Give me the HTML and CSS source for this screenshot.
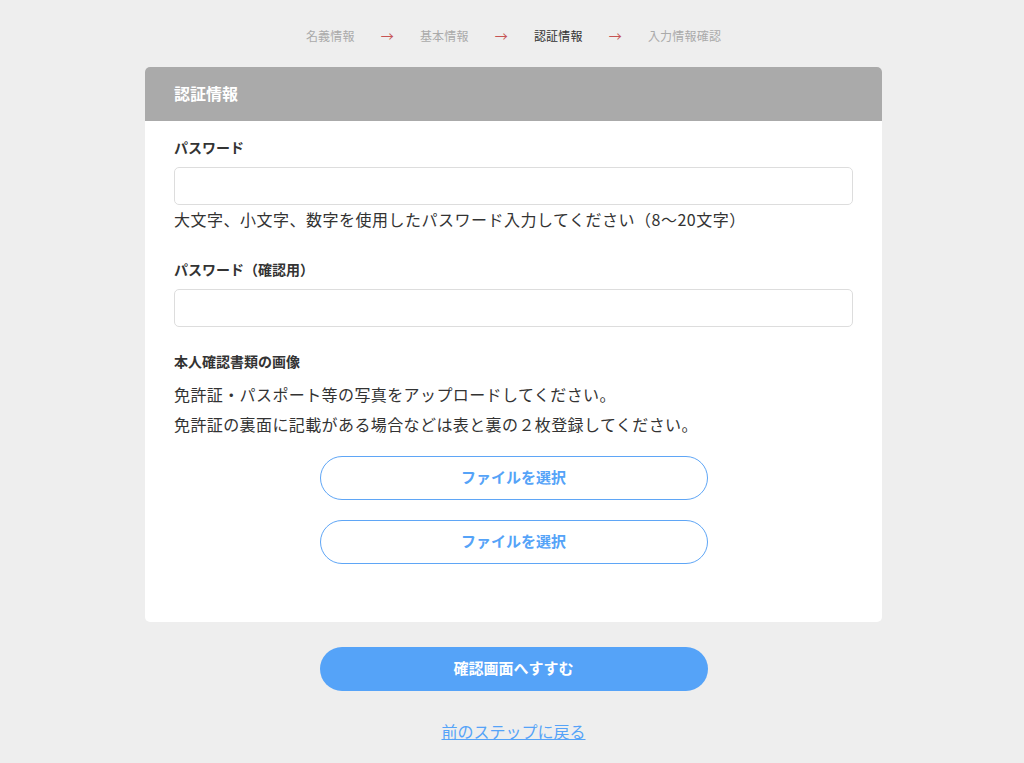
FILE: index.html
```html
<!DOCTYPE html>
<html lang="ja">
<head>
  <meta charset="UTF-8" />
  <meta name="viewport" content="width=device-width, initial-scale=1.0"/>
  <title>認証情報</title>
  <link rel="stylesheet" href="styles.css">
</head>
<body>
  <ol class="steps">
    <li>名義情報</li>
    <li class="arrow">→</li>
    <li>基本情報</li>
    <li class="arrow">→</li>
    <li class="current">認証情報</li>
    <li class="arrow">→</li>
    <li>入力情報確認</li>
  </ol>

  <div class="card">
    <div class="card-head">認証情報</div>
    <div class="card-body">
      <label class="field-label" for="pw">パスワード</label>
      <input type="password" id="pw" class="text-input"/>
      <p class="help">大文字、小文字、数字を使用したパスワード入力してください（8〜20文字）</p>

      <label class="field-label second" for="pw2">パスワード（確認用）</label>
      <input type="password" id="pw2" class="text-input"/>

      <div class="field-label third">本人確認書類の画像</div>
      <p class="note">免許証・パスポート等の写真をアップロードしてください。<br>免許証の裏面に記載がある場合などは表と裏の２枚登録してください。</p>

      <div class="files">
        <button class="file-btn">ファイルを選択</button>
        <button class="file-btn">ファイルを選択</button>
      </div>
    </div>
  </div>

  <button class="submit">確認画面へすすむ</button>
  <a class="back" href="#">前のステップに戻る</a>
</body>
</html>
```

FILE: styles.css
```css
body {
  font-family: "Noto Sans CJK JP", "Noto Sans", sans-serif;
  background-color: #eeeeee;
  color: #333;
  margin: 0;
  padding: 26px 0 0 3px;
  display: flex;
  flex-direction: column;
  align-items: center;
}

.steps {
  list-style: none;
  margin: 0 0 21px;
  padding: 0;
  display: flex;
  gap: 26px;
  font-size: 12px;
  line-height: 20px;
  color: #aaa;
  letter-spacing: 0.2px;
}

.steps .arrow {
  color: #c65454;
  font-size: 13px;
}

.steps .current {
  color: #333;
}

.card {
  width: 737px;
  background: #fff;
  border-radius: 5px;
  overflow: hidden;
}

.card-head {
  background: #aaaaaa;
  color: #fff;
  font-size: 16px;
  font-weight: bold;
  height: 54px;
  line-height: 52px;
  padding: 0 29px;
}

.card-body {
  padding: 16px 29px 58px;
  display: flex;
  flex-direction: column;
}

.field-label {
  font-size: 14px;
  font-weight: bold;
  line-height: 20px;
}

.field-label.second {
  margin-top: 28px;
}

.field-label.third {
  margin-top: 24px;
}

.text-input {
  margin-top: 10px;
  height: 38px;
  border: 1px solid #ddd;
  border-radius: 5px;
  box-sizing: border-box;
  padding: 0 10px;
  font-size: 16px;
}

.help {
  margin: 2px 0 0;
  font-size: 16px;
  line-height: 24px;
  letter-spacing: 0.5px;
}

.note {
  margin: 8px 0 0;
  font-size: 16px;
  line-height: 30px;
  letter-spacing: 0.4px;
}

.files {
  margin-top: 17px;
  display: flex;
  flex-direction: column;
  align-items: center;
  gap: 20px;
}

.file-btn {
  width: 388px;
  height: 44px;
  padding: 0 0 3px;
  background: #fff;
  border: 1px solid #5fa6f6;
  border-radius: 22px;
  color: #55a3f8;
  font-family: inherit;
  font-size: 15px;
  font-weight: bold;
  cursor: pointer;
}

.submit {
  margin-top: 25px;
  width: 388px;
  height: 44px;
  padding: 0 0 3px;
  background: #55a3f8;
  border: none;
  border-radius: 22px;
  color: #fff;
  font-family: inherit;
  font-size: 15px;
  font-weight: bold;
  cursor: pointer;
}

.back {
  margin-top: 28px;
  font-size: 16px;
  line-height: 24px;
  color: #55a3f8;
}
```
